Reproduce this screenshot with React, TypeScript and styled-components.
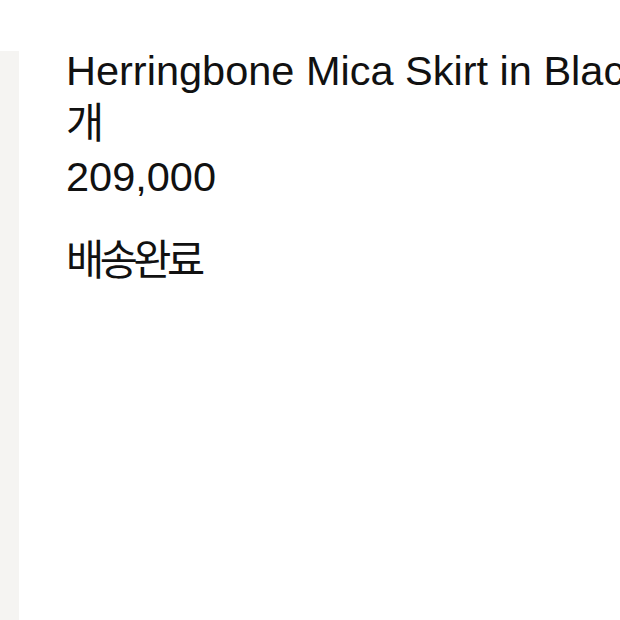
import styled, { createGlobalStyle } from 'styled-components';

const GlobalStyle = createGlobalStyle`
  html, body {
    margin: 0;
    padding: 0;
    background: #fff;
  }
  body {
    font-family: 'Liberation Sans', 'Noto Sans CJK KR', sans-serif;
    color: #111;
  }
`;

const Page = styled.div`
  display: flex;
  width: 620px;
  height: 620px;
  overflow: hidden;
  background-color: #fff;
`;

const SidePanel = styled.div`
  flex: 0 0 19px;
  margin-top: 51px;
  background-color: #f5f4f2;
`;

const Info = styled.div`
  display: flex;
  flex-direction: column;
  padding: 44px 0 0 47px;
  min-width: 0;
  flex: 1;
`;

const Line = styled.div<{ $gap?: number; $tight?: boolean }>`
  font-size: 41.5px;
  line-height: 53px;
  white-space: nowrap;
  margin-top: ${(p) => p.$gap ?? 0}px;
  letter-spacing: ${(p) => (p.$tight ? '-4.5px' : 'normal')};
  color: #111;
`;

export default function App() {
  return (
    <>
      <GlobalStyle />
      <Page>
        <SidePanel />
        <Info>
          <Line>Herringbone Mica Skirt in Black</Line>
          <Line>개</Line>
          <Line>209,000</Line>
          <Line $gap={31} $tight>
            배송완료
          </Line>
        </Info>
      </Page>
    </>
  );
}
